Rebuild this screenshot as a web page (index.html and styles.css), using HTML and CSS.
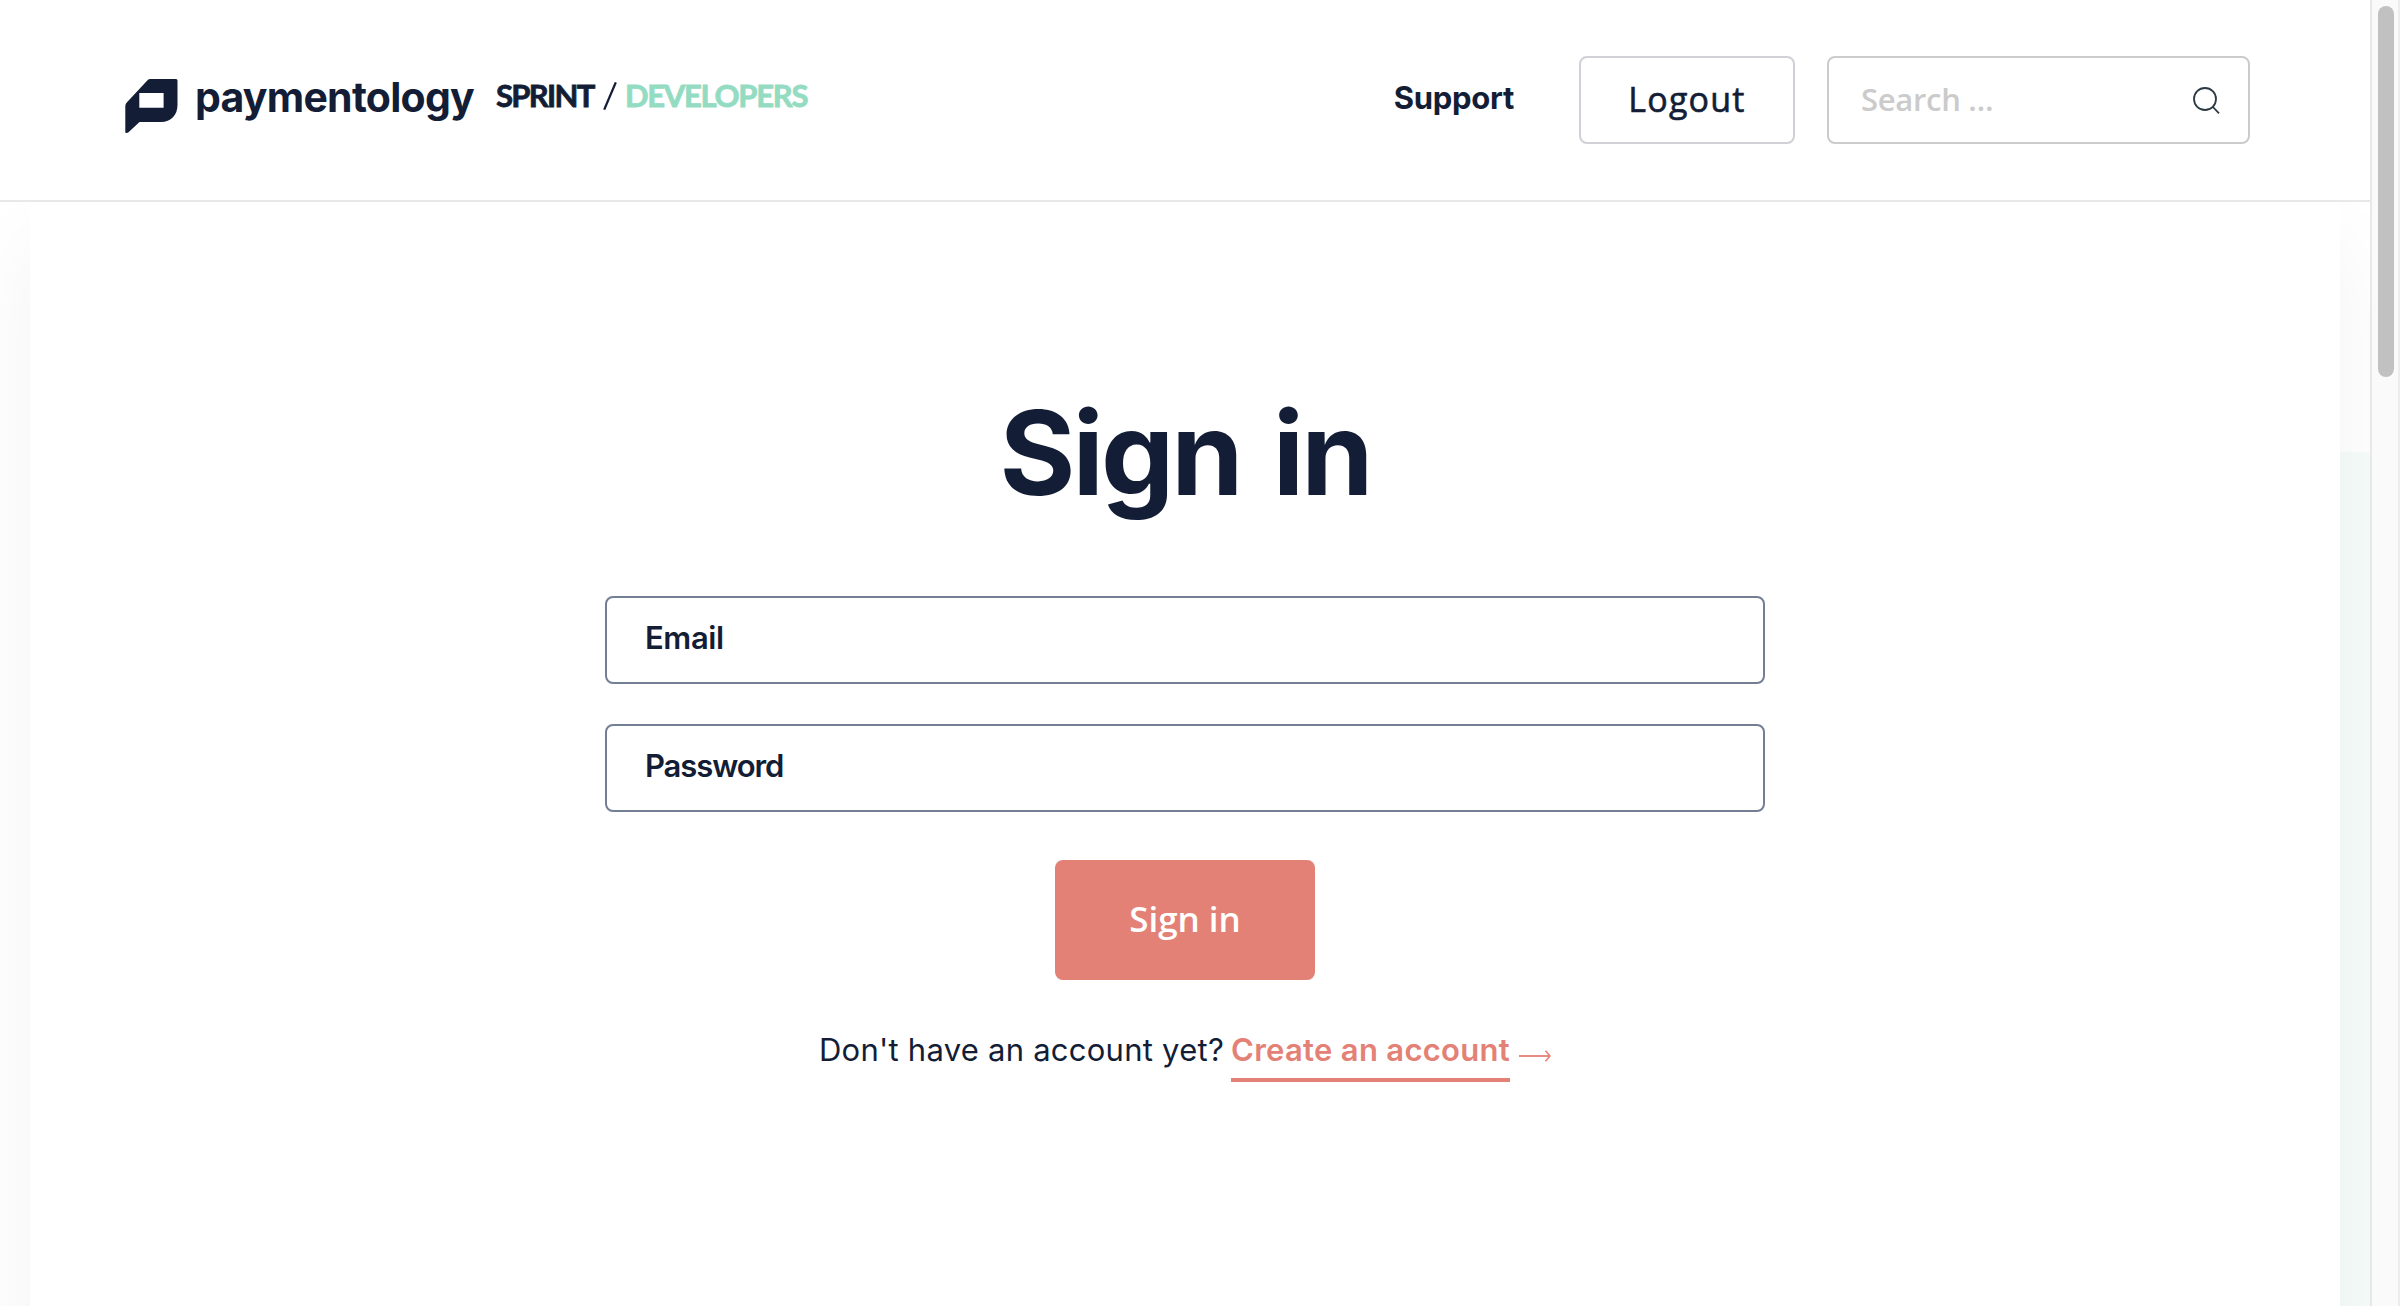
FILE: index.html
```html
<!DOCTYPE html>
<html lang="en">
<head>
<meta charset="utf-8">
<title>Sign in – Paymentology Sprint Developers</title>
<link rel="stylesheet" href="styles.css">
</head>
<body>
<div class="page">
  <header class="header">
    <a class="brand">
      <svg class="brand-mark" width="54" height="55" viewBox="0 0 54 55"><path fill="#131e36" fill-rule="evenodd" d="M25.500 0H51Q52.500 0 52.500 1.500V26C52.500 36 46 43 36 43H14.500L3.500 53.200Q2.300 54.200 1 54Q.3 54 .3 52.500V27Q.3 25 2 23.300L22.500 1.300Q23.500 0 25.500 0ZM14.300 14V28.700H38.600V14Z"/></svg>
      <span class="brand-name">paymentology</span>
    </a>
    <span class="product">SPRINT</span>
    <svg class="slash" width="14" height="28" viewBox="0 0 14 28" stroke="#131e36" stroke-width="2.300"><path d="M1.200 27.600L12.800 .4"/></svg>
    <span class="section">DEVELOPERS</span>
    <nav class="nav">
      <a class="support">Support</a>
      <button class="logout">Logout</button>
      <div class="search">
        <span class="search-hint">Search …</span>
        <svg class="search-icon" width="27" height="27" viewBox="0 0 27 27" fill="none" stroke="#2b3a45" stroke-width="1.800"><circle cx="12" cy="12" r="11"/><path d="M19.500 19.500L26 26.300"/></svg>
      </div>
    </nav>
  </header>
  <main class="main">
    <section class="card">
      <h1 class="title">Sign in</h1>
      <form class="form">
        <label class="field field-email">Email</label>
        <label class="field field-password">Password</label>
        <button class="submit" type="button">Sign in</button>
      </form>
      <p class="signup">
        <span class="question">Don't have an account yet?</span>
        <a class="create">Create an account</a>
        <svg class="arrow" width="32" height="12" viewBox="0 0 32 12" fill="none" stroke="#e48176" stroke-width="1.800"><path d="M0 6H30"/><path d="M26.500 .8L31 6L26.500 11.200" stroke-width="1.600"/></svg>
      </p>
    </section>
  </main>
</div>
<aside class="scrollbar"><div class="thumb"></div></aside>
</body>
</html>
```
FILE: styles.css
```css
* { box-sizing: border-box; }
body {
  margin: 0;
  display: flex;
  width: 2400px;
  height: 1306px;
  overflow: hidden;
  background: #fff;
  color: #131e36;
  font-family: Inter, "Liberation Sans", sans-serif;
}
.page {
  width: 2370px;
  display: flex;
  flex-direction: column;
}
.header {
  height: 202px;
  flex: none;
  display: flex;
  align-items: center;
  padding: 0 120px 0 125px;
  border-bottom: 2px solid #e8e8e8;
}
.brand { display: flex; align-items: center; }
.brand-mark { margin-top: 13px; }
.brand-name {
  margin: 0 22px 7px 16px;
  font-size: 41px;
  font-weight: 700;
  letter-spacing: -.75px;
}
.product, .section {
  margin-bottom: 10px;
  font: 700 31px/40px Lato, "Liberation Sans", sans-serif;
  -webkit-text-stroke: .8px currentColor;
}
.product { width: 97px; letter-spacing: -1.700px; }
.slash { margin: 0 8px 8px 10px; }
.section { color: #93dcc2; letter-spacing: -1.300px; }
.nav { display: flex; align-items: center; margin-left: auto; }
.support {
  margin: 0 65px 5px 0;
  font-size: 31px;
  font-weight: 700;
  letter-spacing: -.3px;
}
.logout {
  width: 216px;
  height: 88px;
  margin-right: 32px;
  padding: 0 0 3px;
  border: 2px solid #d0d0d7;
  border-radius: 8px;
  background: #fff;
  color: inherit;
  font: 500 34px/40px "Open Sans", sans-serif;
  letter-spacing: 1.200px;
  -webkit-text-stroke: .6px currentColor;
}
.search {
  width: 423px;
  height: 88px;
  display: flex;
  align-items: center;
  justify-content: space-between;
  padding: 0 28px 0 32px;
  border: 2px solid #cbcbcb;
  border-radius: 8px;
}
.search-hint {
  padding-bottom: 2px;
  color: #cbcbcb;
  font: 600 31px/40px "Open Sans", sans-serif;
  letter-spacing: -.3px;
}
.main {
  flex: 1;
  overflow: hidden;
  padding: 0 30px;
  background: linear-gradient(#f5fcfa, #f5fcfa) right 250px / 50% 100% no-repeat #fff;
}
.card {
  height: 1400px;
  display: flex;
  flex-direction: column;
  align-items: center;
  padding-top: 181px;
  background: #fff;
  box-shadow: 0 40px 80px rgba(0, 0, 0, .05);
}
.title {
  margin: 0;
  font-size: 116px;
  font-weight: 700;
  line-height: 140px;
  letter-spacing: -3px;
  word-spacing: 8px;
}
.form {
  margin-top: 73px;
  display: flex;
  flex-direction: column;
  align-items: center;
}
.field {
  width: 1160px;
  height: 88px;
  margin-bottom: 40px;
  padding: 0 38px 5px;
  border: 2px solid #747f95;
  border-radius: 8px;
  font-size: 31px;
  font-weight: 600;
  line-height: 79px;
}
.field-email { letter-spacing: -.4px; }
.field-password { margin-bottom: 48px; letter-spacing: -1.100px; }
.submit {
  width: 260px;
  height: 120px;
  padding: 0 0 3px;
  border: 0;
  border-radius: 8px;
  background: #e48176;
  color: #fff;
  font: 600 35px/40px "Open Sans", sans-serif;
}
.signup {
  margin: 37px 0 0;
  display: flex;
  font-size: 31px;
  line-height: 65px;
}
.question { letter-spacing: .25px; margin-right: 7px; }
.create {
  height: 65px;
  border-bottom: 4px solid #e48176;
  color: #e48176;
  font-weight: 600;
  letter-spacing: .3px;
}
.arrow { margin: 33px 0 0 9px; }
.scrollbar {
  width: 30px;
  padding: 6px 4px 0 6px;
  border-left: 2px solid #e8e8e8;
  border-right: 2px solid #ececec;
  background: #fafafa;
}
.thumb { width: 16px; height: 371px; border-radius: 8px; background: #c1c1c1; }
```
